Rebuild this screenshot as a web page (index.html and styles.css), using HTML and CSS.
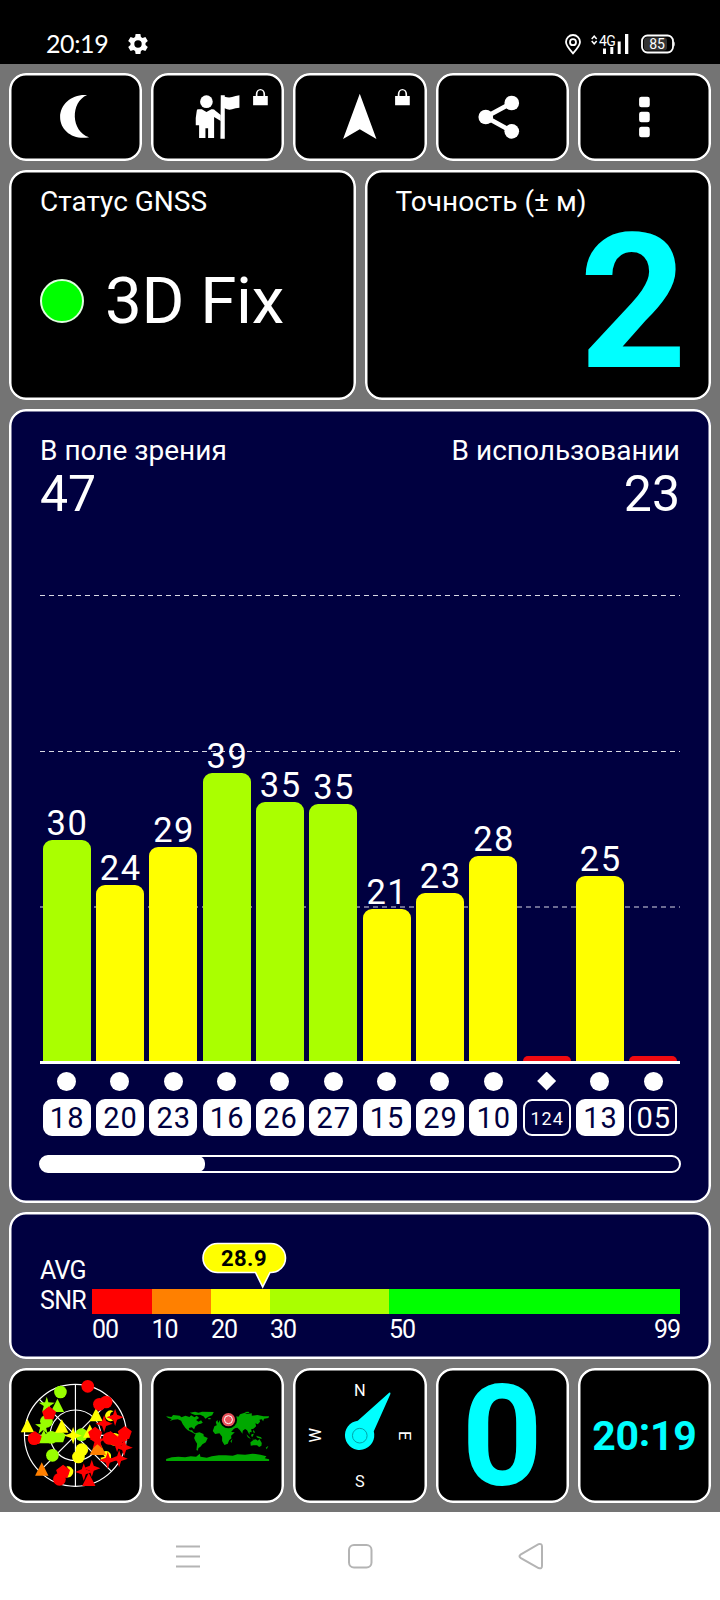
FILE: index.html
```
<!DOCTYPE html>
<html lang="ru">
<head>
    <meta charset="UTF-8">
    <title>GNSS</title>
    <link rel="stylesheet" href="styles.css">
</head>
<body>
    <header class="status-bar">
        <span class="status-time">20:19</span>
        <svg class="status-gear" width="20" height="20" viewBox="0 0 20 20">
            <path fill="#fff" fill-rule="evenodd" d="M7.6 0h4.8l.5 2.9 1.7 1 2.8-1 2.4 4.1-2.3 1.9v2.2l2.3 1.9-2.4 4.1-2.8-1-1.7 1-.5 2.9H7.6l-.5-2.9-1.7-1-2.8 1L.2 13l2.3-1.9V8.9L.2 7l2.4-4.1 2.8 1 1.7-1zM10 6.300a3.700 3.700 0 1 0 0 7.400 3.700 3.700 0 0 0 0-7.400z"/>
        </svg>
        <div class="status-right">
            <svg width="16" height="21" viewBox="0 0 16 21" fill="none" stroke="#fff" stroke-width="1.8">
                <path d="M8 19.300C4.500 15.500 1 11.700 1 8a7 7 0 0 1 14 0c0 3.700-3.500 7.500-7 11.300z"/>
                <circle cx="8" cy="8.200" r="3"/>
            </svg>
            <svg class="status-signal" width="38" height="21" viewBox="0 0 38 21">
                <path fill="none" stroke="#fff" stroke-width="1.500" d="M.7 5l2.500-2.800L5.700 5M.7 7l2.500 2.800L5.700 7"/>
                <text x="8" y="11.500" class="signal-text">4G</text>
                <path fill="#fff" d="M12 14.500h3V20h-3zM19.300 13h3v7h-3zM26.700 7.500h3V20h-3zM34 0h3.300v20H34z"/>
            </svg>
            <svg class="status-battery" width="34" height="20" viewBox="0 0 34 20">
                <rect x="1" y="1.500" width="31" height="17" rx="5.500" fill="#000" stroke="#fff" stroke-width="1.800"/>
                <rect x="3" y="3.500" width="23" height="13" rx="3" fill="#333"/>
                <path d="M32.500 7v6c1.600-.6 1.600-5.400 0-6z" fill="#fff"/>
                <text x="16" y="14.800" class="battery-text">85</text>
            </svg>
        </div>
    </header>

    <main class="app">
        <div class="row row-buttons">
            <div class="card">
                <svg viewBox="28 219 399 264">
                    <path fill="#fff" d="M262 285C217 281 181 312 181 351C181 391 219 421 268 412C213 394 211 307 262 285z"/>
                </svg>
            </div>
            <div class="card">
                <svg viewBox="454 219 399 264">
                    <g fill="#fff">
                        <circle cx="620" cy="305" r="19"/>
                        <path d="M597 328q5-1 9 0l14 8 15-8q8-1 12 4l16 13v18l-20-12v63h-18v-29h-8v29h-19v-38h-10q-2-20 3-44-1-4 6-4z"/>
                        <path d="M663 286h12v4q12 4 22 1 10-3 22-5v37q-12 0-22 5-12 3-22-3v91h-13z"/>
                    </g>
                    <path class="lock" d="M760 288h8v-5a14 16 0 0 1 28 0v5h8v28h-44zM773 288h18v-5a9 12 0 0 0-18 0z"/>
                </svg>
            </div>
            <div class="card">
                <svg viewBox="-200 219 399 264">
                    <path fill="#fff" d="M0 281L50 417L0 388L-50 417z"/>
                    <path class="lock" d="M106 288h8v-5a14 16 0 0 1 28 0v5h8v28h-44zM119 288h18v-5a9 12 0 0 0-18 0z"/>
                </svg>
            </div>
            <div class="card">
                <svg viewBox="228 219 399 264">
                    <path fill="none" stroke="#fff" stroke-width="14" d="M455 309L377 351L455 394"/>
                    <g fill="#fff">
                        <circle cx="455" cy="309" r="22"/>
                        <circle cx="377" cy="351" r="22"/>
                        <circle cx="455" cy="394" r="22"/>
                    </g>
                </svg>
            </div>
            <div class="card">
                <svg viewBox="654 219 399 264">
                    <g fill="#fff">
                        <rect x="837" y="290" width="32" height="32" rx="7"/>
                        <rect x="837" y="335" width="32" height="32" rx="7"/>
                        <rect x="837" y="380" width="32" height="32" rx="7"/>
                    </g>
                </svg>
            </div>
        </div>

        <div class="row row-info">
            <section class="card info">
                <h2 class="label">Статус GNSS</h2>
                <div class="fix"><span class="fix-dot"></span>3D Fix</div>
            </section>
            <section class="card info">
                <h2 class="label">Точность (± м)</h2>
                <div class="accuracy">2</div>
            </section>
        </div>

        <section class="card card-blue chart">
            <div class="chart-head">
                <div>
                    <h2 class="label">В поле зрения</h2>
                    <div class="count">47</div>
                </div>
                <div class="chart-used">
                    <h2 class="label">В использовании</h2>
                    <div class="count">23</div>
                </div>
            </div>
            <div class="plot">
                <svg class="grid-lines" width="640" height="541">
                    <path d="M0 75.500H640M0 231.500H640M0 387H640"/>
                </svg>
                <div class="col"><span>30</span><div class="bar lime" style="height: 221.5px"></div></div>
                <div class="col"><span>24</span><div class="bar yellow" style="height: 176.5px"></div></div>
                <div class="col"><span>29</span><div class="bar yellow" style="height: 214.5px"></div></div>
                <div class="col"><span>39</span><div class="bar lime" style="height: 288.5px"></div></div>
                <div class="col"><span>35</span><div class="bar lime" style="height: 259px"></div></div>
                <div class="col"><span>35</span><div class="bar lime" style="height: 257px"></div></div>
                <div class="col"><span>21</span><div class="bar yellow" style="height: 152px"></div></div>
                <div class="col"><span>23</span><div class="bar yellow" style="height: 168.5px"></div></div>
                <div class="col"><span>28</span><div class="bar yellow" style="height: 205px"></div></div>
                <div class="col"><div class="bar red" style="height: 5px"></div></div>
                <div class="col"><span>25</span><div class="bar yellow" style="height: 185px"></div></div>
                <div class="col"><div class="bar red" style="height: 5px"></div></div>
            </div>
            <div class="sats">
                <div class="sat"><i class="dot"></i><b class="id">18</b></div>
                <div class="sat"><i class="dot"></i><b class="id">20</b></div>
                <div class="sat"><i class="dot"></i><b class="id">23</b></div>
                <div class="sat"><i class="dot"></i><b class="id">16</b></div>
                <div class="sat"><i class="dot"></i><b class="id">26</b></div>
                <div class="sat"><i class="dot"></i><b class="id">27</b></div>
                <div class="sat"><i class="dot"></i><b class="id">15</b></div>
                <div class="sat"><i class="dot"></i><b class="id">29</b></div>
                <div class="sat"><i class="dot"></i><b class="id">10</b></div>
                <div class="sat"><i class="dot diamond"></i><b class="id unused small">124</b></div>
                <div class="sat"><i class="dot"></i><b class="id">13</b></div>
                <div class="sat"><i class="dot"></i><b class="id unused">05</b></div>
            </div>
            <div class="scroll"><div class="scroll-thumb"></div></div>
        </section>

        <section class="card card-blue snr">
            <div class="snr-label">AVG<br>SNR</div>
            <div class="snr-scale">
                <svg class="callout" width="86" height="47" viewBox="0 0 86 47">
                    <path d="M15.500 1.500H69a14.500 14.500 0 0 1 0 29H68L60.700 45L53.500 30.500H15.500a14.500 14.500 0 0 1 0-29z"/>
                    <text x="42" y="23.500">28.9</text>
                </svg>
                <div class="snr-bar">
                    <div class="red"></div>
                    <div class="orange"></div>
                    <div class="yellow"></div>
                    <div class="lime"></div>
                    <div class="green"></div>
                </div>
                <div class="snr-ticks">
                    <span>00</span><span>10</span><span>20</span><span>30</span><span>50</span><span class="last">99</span>
                </div>
            </div>
        </section>

        <div class="row row-tiles">
            <div class="card">
                <svg viewBox="28 24 399 405">
                    <defs>
                        <circle id="c" r="19"/>
                        <path id="p" d="M0-21L21-5L13 18H-13L-21-5z"/>
                        <path id="t" d="M0-22L20 18H-20z"/>
                        <path id="s" d="M0-26L6-8L26 0L6 7L0 26L-6 7L-26 0L-6-8z"/>
                        <path id="s5" d="M0-24L5-7L24-6L9 4L14 23L0 11L-14 23L-9 4L-24-6L-5-7z"/>
                    </defs>
                    <g fill="none" stroke="#fff" stroke-width="3.500">
                        <circle cx="227" cy="226" r="153"/>
                        <circle cx="227" cy="226" r="76"/>
                        <path d="M227 73V379M74 226H380M119 118L335 334M335 118L119 334"/>
                    </g>
                    <g class="sky">
                        <g fill="#9f0">
                            <use href="#c" x="182" y="96"/>
                            <use href="#s5" x="141" y="134"/>
                            <use href="#t" x="173" y="138"/>
                            <use href="#c" x="140" y="184"/>
                            <use href="#s5" x="130" y="199"/>
                            <use href="#t" x="132" y="232"/>
                            <use href="#c" x="155" y="232"/>
                            <use href="#p" x="177" y="229"/>
                            <use href="#c" x="245" y="224"/>
                            <use href="#c" x="158" y="286"/>
                        </g>
                        <g fill="#ff0">
                            <use href="#t" x="83" y="199"/>
                            <use href="#t" x="186" y="200"/>
                            <use href="#t" x="270" y="215"/>
                            <use href="#s" x="220" y="227"/>
                            <use href="#c" x="246" y="269"/>
                            <use href="#c" x="236" y="291"/>
                            <use href="#t" x="289" y="166"/>
                            <path d="M341 154A16 16 0 1 0 341 181A14 14 0 0 1 341 154z"/>
                            <path d="M306 279A16 16 0 1 1 324 304A16 16 0 0 1 302 293L315 290z"/>
                            <path d="M200 319A17 17 0 1 1 199 352A22 22 0 0 0 200 319z"/>
                            <use href="#c" x="344" y="238"/>
                        </g>
                        <g fill="#ff8000">
                            <use href="#t" x="126" y="329"/>
                            <use href="#t" x="290" y="266"/>
                            <use href="#t" x="299" y="267"/>
                        </g>
                        <g fill="#f00">
                            <use href="#c" x="264" y="79"/>
                            <use href="#p" x="148" y="160"/>
                            <use href="#c" x="103" y="236"/>
                            <use href="#p" x="105" y="234"/>
                            <use href="#c" x="319" y="126"/>
                            <use href="#c" x="299" y="133"/>
                            <use href="#s" x="346" y="172"/>
                            <use href="#s" x="313" y="191"/>
                            <use href="#p" x="286" y="221"/>
                            <use href="#s5" x="293" y="242"/>
                            <use href="#c" x="328" y="235"/>
                            <use href="#p" x="332" y="234"/>
                            <use href="#s" x="360" y="240"/>
                            <use href="#p" x="375" y="219"/>
                            <use href="#s" x="373" y="263"/>
                            <use href="#s" x="352" y="251"/>
                            <use href="#s" x="358" y="296"/>
                            <use href="#s" x="324" y="301"/>
                            <use href="#s" x="276" y="325"/>
                            <use href="#s" x="252" y="336"/>
                            <use href="#t" x="267" y="360"/>
                            <use href="#p" x="190" y="335"/>
                            <use href="#c" x="179" y="358"/>
                        </g>
                    </g>
                </svg>
            </div>
            <div class="card">
                <svg viewBox="18 24 399 405">
                    <g fill="#00a800">
                        <path d="M63 169L79 171L84 165L104 167L109 172L121 167L133 171L138 166L148 172L155 167L162 174L153 180L160 185L168 181L173 188L167 191L159 193L151 199L147 208L140 202L131 204L133 211L141 211L145 217L154 221L151 223L140 217L128 211L121 204L113 193L108 182L98 178L85 179L74 183L80 177L69 174z"/>
                        <path d="M134 158L150 155L160 158L171 155L206 156L201 166L190 170L181 176L175 169L165 164L150 165L142 162z"/>
                        <path d="M153 219L163 217L175 222L176 229L188 234L182 247L172 253L166 260L160 264L158 272L154 270L156 251L151 243L147 234z"/>
                        <path d="M189 174L197 174L196 178L190 178zM212 186L217 180L219 188L214 191z"/>
                        <path d="M208 199L216 195L212 191L221 187L225 179L233 174L246 171L260 173L270 168L280 170L285 163L299 158L305 162L320 160L320 167L337 165L355 169L372 169L370 174L357 176L354 184L350 178L343 179L345 185L338 193L331 190L333 199L325 206L318 208L320 217L314 216L313 224L306 211L300 207L293 212L292 221L284 210L277 203L271 204L266 207L258 216L269 217L258 227L259 235L252 241L248 251L238 255L231 243L231 230L223 220L210 222L203 213z"/>
                        <path d="M262 237L259 249L256 244zM304 223L313 232L317 237L308 232zM319 223L326 221L323 230L318 229zM333 227L348 232L350 237L337 233zM322 236L331 238L322 238zM325 209L329 216L328 220L324 216z"/>
                        <path d="M316 247L325 240L332 238L338 242L343 237L350 249L349 257L342 261L336 256L325 256L317 257zM362 263L370 257L365 268zM299 156L310 155L313 159L303 160z"/>
                        <path d="M63 303V297L80 292L100 290L120 292L137 289L153 290L164 281L166 290L185 293L200 289L221 286L242 286L263 287L277 283L300 284L322 281L346 284L364 289L359 295L372 298V303z"/>
                    </g>
                    <circle cx="250" cy="179" r="26" fill="#000"/>
                    <circle cx="250" cy="179" r="20" fill="#e8525a"/>
                    <circle cx="250" cy="179" r="12" fill="none" stroke="#fff" stroke-width="3"/>
                </svg>
            </div>
            <div class="card">
                <svg class="compass" viewBox="445 24 399 405">
                    <text x="645" y="108">N</text>
                    <text x="645" y="380">S</text>
                    <text transform="translate(528 226) rotate(-90)">W</text>
                    <text transform="translate(763 227) rotate(90)">E</text>
                    <path fill="#0ff" d="M733 98Q738 97 737 102L687 214A44 44 0 1 1 639 182z"/>
                    <circle cx="645" cy="227" r="22" fill="none" stroke="#00a3a8" stroke-width="3"/>
                </svg>
            </div>
            <div class="card tile-text speed">0</div>
            <div class="card tile-text clock">20<span class="colon">:</span>19</div>
        </div>
    </main>

    <nav class="nav">
        <svg width="26" height="28" viewBox="0 0 26 28" stroke="#b4b4b4" stroke-width="2.200" fill="none">
            <path d="M1 4.500H25M1 14.500H25M1 24.500H25"/>
        </svg>
        <svg width="26" height="28" viewBox="0 0 26 28" stroke="#b4b4b4" stroke-width="2" fill="none">
            <rect x="2" y="3" width="22.500" height="22.500" rx="5"/>
        </svg>
        <svg width="26" height="28" viewBox="0 0 26 28" stroke="#b4b4b4" stroke-width="2" fill="none">
            <path d="M2.500 12.700L20.500 2.100Q24 1.300 24 4.500V24Q24 27.300 20.500 26L2.500 15.800Q.5 14.200 2.500 12.700z"/>
        </svg>
    </nav>
</body>
</html>
```
FILE: styles.css
```
* {
    box-sizing: border-box;
}
body {
    margin: 0;
    width: 720px;
    height: 1600px;
    background: #747474;
    color: #fff;
    font-family: Roboto, "Noto Sans", sans-serif;
    overflow: hidden;
}
svg {
    display: block;
}

.status-bar {
    display: flex;
    height: 64px;
    padding: 34px 45px 0 46px;
    background: #000;
}
.status-time {
    width: 82px;
    font-family: Lato, sans-serif;
    font-size: 25px;
    line-height: 19px;
    letter-spacing: -0.4px;
}
.status-right {
    display: flex;
    margin-left: auto;
}
.status-signal {
    margin-left: 10px;
}
.status-battery {
    margin-left: 12px;
}
.signal-text {
    font-size: 14px;
    fill: #fff;
    letter-spacing: -0.7px;
}
.battery-text {
    font-size: 14px;
    fill: #fff;
    text-anchor: middle;
}

.app {
    display: flex;
    flex-direction: column;
    gap: 9px;
    padding: 9px;
}
.row {
    display: flex;
    gap: 9px;
}
.row > .card {
    flex: 1 1 0;
    min-width: 0;
}
.row-buttons {
    height: 88px;
}
.row-info {
    height: 230px;
}
.row-tiles {
    height: 135px;
}
.card {
    background: #000;
    border-radius: 17px;
    box-shadow: inset 0 0 0 2.5px #fff;
}
.card-blue {
    background: #000040;
}
.card > svg {
    width: 100%;
    height: 100%;
}
.lock {
    fill: #fff;
    fill-rule: evenodd;
}

.info {
    padding: 16px 31px 0;
}
.label {
    margin: 0;
    font-size: 28px;
    font-weight: 400;
    line-height: 32px;
}
.fix {
    display: flex;
    align-items: center;
    margin-top: 45px;
    height: 76px;
    font-size: 65.5px;
    line-height: 76px;
    letter-spacing: -0.3px;
    white-space: pre;
}
.fix-dot {
    width: 44px;
    height: 44px;
    margin-right: 21px;
    border: 2px solid #dfd;
    border-radius: 50%;
    background: #0f0;
}
.accuracy {
    margin-right: -7px;
    color: #0ff;
    font-size: 188px;
    font-weight: 700;
    line-height: 171px;
    text-align: right;
}

.chart {
    height: 794px;
    padding: 26px 31px 0;
}
.chart-head {
    display: flex;
    justify-content: space-between;
    height: 85px;
}
.chart-used {
    text-align: right;
}
.count {
    font-size: 50px;
    line-height: 54px;
}
.plot {
    position: relative;
    display: flex;
    align-items: flex-end;
    width: 640px;
    height: 544px;
    border-bottom: 3px solid #fff;
}
.grid-lines {
    position: absolute;
    left: 0;
    top: 0;
    stroke: #d8d8e4;
    stroke-width: 1.2;
    stroke-dasharray: 5 4;
}
.col {
    position: relative;
    flex: 1;
    text-align: center;
}
.col > span {
    display: block;
    font-size: 34.5px;
    line-height: 33px;
    letter-spacing: 1.5px;
    margin-right: -1.5px;
}
.bar {
    width: 48px;
    margin: 0 auto;
    border-radius: 9px 9px 0 0;
}
.red {
    background: #f00;
}
.orange {
    background: #ff8000;
}
.yellow {
    background: #ff0;
}
.lime {
    background: #af0;
}
.green {
    background: #0f0;
}
.bar.red {
    background: #f00a10;
    border-radius: 5px 5px 0 0;
}

.sats {
    display: flex;
    width: 640px;
}
.sat {
    flex: 1;
    display: flex;
    flex-direction: column;
    align-items: center;
    gap: 8.5px;
    padding-top: 7.5px;
}
.dot {
    width: 19px;
    height: 19px;
    border-radius: 50%;
    background: #fff;
}
.diamond {
    border-radius: 0;
    clip-path: polygon(50% 0, 100% 50%, 50% 100%, 0 50%);
}
.id {
    width: 48px;
    height: 37px;
    border: 2px solid #fff;
    border-radius: 9px;
    background: #fff;
    color: #000040;
    font-size: 29px;
    font-weight: 400;
    line-height: 35px;
    letter-spacing: 1px;
    text-indent: 1px;
    text-align: center;
}
.unused {
    background: #000040;
    color: #fff;
}
.small {
    font-size: 18px;
}
.scroll {
    width: 642px;
    height: 18px;
    margin: 19px 0 0 -1px;
    border: 2px solid #fff;
    border-radius: 9px;
    background: #000040;
}
.scroll-thumb {
    width: 163px;
    height: 14px;
    border-radius: 7px 6px 6px 7px;
    background: #fff;
    box-shadow: 0 0 0 1px #fff;
}

.snr {
    display: flex;
    height: 147px;
    padding: 31px 31px 0;
}
.snr-label {
    width: 52px;
    padding-top: 13px;
    font-size: 25px;
    line-height: 30px;
    letter-spacing: -0.7px;
}
.snr-scale {
    position: relative;
    flex: 1;
    padding-top: 45.5px;
}
.callout {
    position: absolute;
    left: 110px;
    top: -1px;
}
.callout path {
    fill: #ff0;
    stroke: #fff;
    stroke-width: 1.6;
}
.callout text {
    fill: #000;
    font-size: 22px;
    font-weight: 700;
    text-anchor: middle;
    letter-spacing: 0.5px;
}
.snr-bar,
.snr-ticks {
    display: grid;
    grid-template-columns: 59.5px 59.5px 59px 119px 1fr;
}
.snr-bar {
    height: 25px;
}
.snr-ticks {
    grid-template-columns: 59.5px 59.5px 59px 119px 1fr auto;
    font-size: 25px;
    line-height: 31px;
    letter-spacing: -1px;
}

.compass text {
    fill: #fff;
    font-size: 49px;
    text-anchor: middle;
}
.tile-text {
    color: #0ff;
    font-weight: 700;
    text-align: center;
    line-height: 137px;
}
.speed {
    font-size: 141px;
}
.clock {
    font-size: 41px;
    letter-spacing: -0.3px;
}
.colon {
    position: relative;
    top: -4px;
}

.nav {
    display: flex;
    justify-content: space-between;
    height: 88px;
    padding: 30px 176px 0 175px;
    background: #fff;
}
```
